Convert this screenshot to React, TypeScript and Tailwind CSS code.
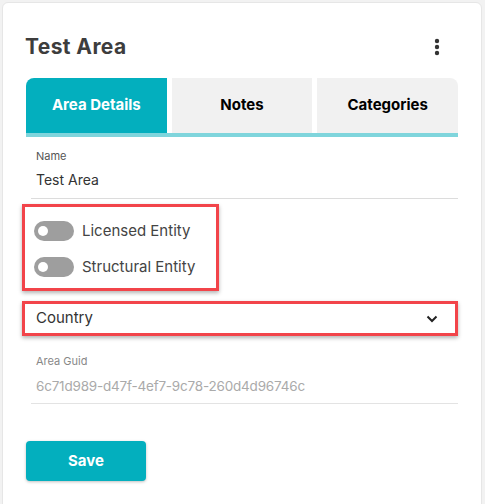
import React, { useState } from 'react';

const font = { fontFamily: 'Inter, "Open Sans", sans-serif' };

function Toggle({ label }: { label: string }) {
  return (
    <div className="flex items-center gap-2 h-[20px]">
      <div className="relative w-[40px] h-[20px] rounded-full bg-[#9e9e9e] shrink-0">
        <span className="absolute left-[4px] top-[5px] w-[10px] h-[10px] rounded-full bg-white" />
      </div>
      <span className="text-[15px] text-[#444]">{label}</span>
    </div>
  );
}

export default function App() {
  const [tab, setTab] = useState('Area Details');
  const tabs = ['Area Details', 'Notes', 'Categories'];

  return (
    <div className="w-[485px] h-[504px] bg-[#f2f2f2] pl-[2px] pt-[2px] pr-[3px] overflow-hidden" style={font}>
      <div className="bg-white rounded-t-[6px] border border-[#e6e6e6] h-[520px] px-[23px]">
        {/* header */}
        <div className="flex items-center justify-between pt-[31px]">
          <h1 className="-ml-px text-[21px] font-bold tracking-[0.4px] text-[#3d3d3d] leading-[26px]">Test Area</h1>
          <svg width="6" height="18" viewBox="0 0 6 18" className="mr-[18px]">
            <circle cx="3" cy="3" r="2.2" fill="#333" />
            <circle cx="3" cy="9" r="2.2" fill="#333" />
            <circle cx="3" cy="15" r="2.2" fill="#333" />
          </svg>
        </div>

        {/* tabs */}
        <div className="mt-[18px] w-[432px]">
          <div className="flex gap-[5px] h-[55px]">
            {tabs.map((t, i) => (
              <button
                key={t}
                onClick={() => setTab(t)}
                className={
                  'flex-1 flex items-center justify-center text-[15px] font-bold ' +
                  (i === 0 ? 'rounded-tl-[8px] ' : '') +
                  (i === 2 ? 'rounded-tr-[8px] ' : '') +
                  (tab === t ? 'bg-[#03afbe] text-white' : 'bg-[#f1f1f1] text-black')
                }
              >
                {t}
              </button>
            ))}
          </div>
          <div className="h-[4px] bg-[#7fd5dc]" />
        </div>

        {/* name field */}
        <div className="w-[427px] ml-[5px] border-b border-[#dcdcdc] pt-[12px] pb-[8px] pl-[5px]">
          <p className="text-[11px] text-[#555] leading-[14px]">Name</p>
          <p className="text-[14px] text-[#333] leading-[20px] mt-[7px]">Test Area</p>
        </div>

        {/* toggles */}
        <div className="mt-[5px] -ml-[4px] w-[197px] border-[3px] border-[#f2444a] shadow-[0_2px_4px_rgba(0,0,0,0.3)] pl-[9px] pt-[14px] pb-[11px] flex flex-col gap-[16px]">
          <Toggle label="Licensed Entity" />
          <Toggle label="Structural Entity" />
        </div>

        {/* country select */}
        <div className="mt-[10px] -ml-[4px] w-[436px] h-[35px] border-[3px] border-[#f2444a] shadow-[0_2px_4px_rgba(0,0,0,0.3)] flex items-center justify-between pl-[11px] pr-[17px]">
          <span className="text-[15px] text-[#333]">Country</span>
          <svg width="12" height="8" viewBox="0 0 12 8" fill="none">
            <path d="M1.5 1.5 L6 6 L10.5 1.5" stroke="#222" strokeWidth="2" />
          </svg>
        </div>

        {/* guid field */}
        <div className="w-[427px] ml-[5px] border-b border-[#e3e3e3] pt-[18px] pb-[7px] pl-[5px]">
          <p className="text-[11px] text-[#888] leading-[14px]">Area Guid</p>
          <p className="text-[13.5px] tracking-[-0.2px] text-[#aaa] leading-[20px] mt-[8px]">6c71d989-d47f-4ef7-9c78-260d4d96746c</p>
        </div>

        <button className="mt-[37px] w-[120px] h-[40px] rounded-[4px] bg-[#03afbe] text-white text-[15px] font-bold shadow-[0_1px_3px_rgba(0,0,0,0.25)]">
          Save
        </button>
      </div>
    </div>
  );
}
